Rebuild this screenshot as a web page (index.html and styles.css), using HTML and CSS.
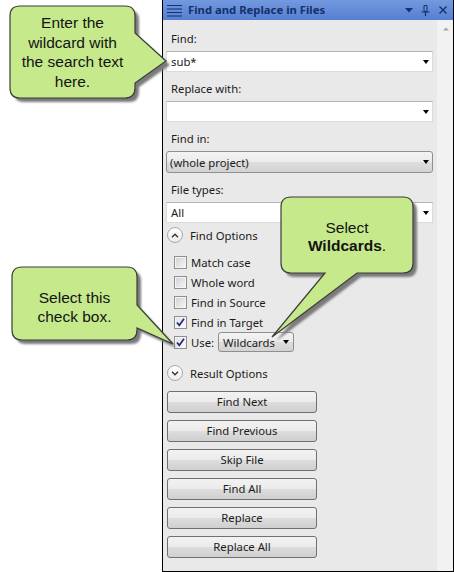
FILE: index.html
```html
<!DOCTYPE html>
<html>
<head>
<meta charset="utf-8">
<title>Find and Replace in Files</title>
<link rel="stylesheet" href="styles.css">
</head>
<body>
<div class="stage">
  <div class="panel">
    <div class="titlebar">
      <svg class="menu-icon" width="15" height="12" viewBox="0 0 15 12">
        <path d="M0 0.5H15M0 4H15M0 7.5H15M0 11H15" stroke="#15306b" stroke-width="1"/>
      </svg>
      <span class="title">Find and Replace in Files</span>
      <span class="title-tools">
        <svg width="8" height="5" viewBox="0 0 8 5"><path d="M0 0H8L4 4.5Z" fill="#15306b"/></svg>
        <svg width="9" height="11" viewBox="0 0 9 11"><path d="M3 0.5H6V6.5H3Z" fill="none" stroke="#15306b"/><path d="M0.5 7H8.5M4.5 7V11" stroke="#15306b" stroke-width="1.2"/></svg>
        <svg width="8" height="8" viewBox="0 0 8 8"><path d="M0.5 0.5L7.5 7.5M7.5 0.5L0.5 7.5" stroke="#15306b" stroke-width="1.4"/></svg>
      </span>
    </div>
    <div class="body">
      <div class="content">
        <div class="field">
          <div class="label">Find:</div>
          <div class="input"><span class="value">sub*</span><span class="arrow"></span></div>
        </div>
        <div class="field">
          <div class="label">Replace with:</div>
          <div class="input"><span class="value"></span><span class="arrow"></span></div>
        </div>
        <div class="field">
          <div class="label">Find in:</div>
          <div class="input combo"><span class="value">(whole project)</span><span class="arrow"></span></div>
        </div>
        <div class="field">
          <div class="label">File types:</div>
          <div class="input"><span class="value">All</span><span class="arrow"></span></div>
        </div>

        <div class="section first-section">
          <span class="circle"><svg width="8" height="5" viewBox="0 0 8 5"><path d="M1 4.2L4 1.2L7 4.2" fill="none" stroke="#333" stroke-width="1.4"/></svg></span>
          <span>Find Options</span>
        </div>

        <div class="checks">
          <div class="check-row"><span class="box"></span><span>Match case</span></div>
          <div class="check-row"><span class="box"></span><span>Whole word</span></div>
          <div class="check-row"><span class="box"></span><span>Find in Source</span></div>
          <div class="check-row"><span class="box checked"><svg width="11" height="11" viewBox="0 0 11 11"><path d="M2 5.5L4.3 8.3L9 1.8" fill="none" stroke="#25277e" stroke-width="1.7"/></svg></span><span>Find in Target</span></div>
          <div class="check-row"><span class="box checked"><svg width="11" height="11" viewBox="0 0 11 11"><path d="M2 5.5L4.3 8.3L9 1.8" fill="none" stroke="#25277e" stroke-width="1.7"/></svg></span><span>Use:</span>
            <span class="small-combo"><span>Wildcards</span><span class="arrow"></span></span>
          </div>
        </div>

        <div class="section second-section">
          <span class="circle"><svg width="8" height="5" viewBox="0 0 8 5"><path d="M1 0.8L4 3.8L7 0.8" fill="none" stroke="#333" stroke-width="1.4"/></svg></span>
          <span>Result Options</span>
        </div>

        <div class="buttons">
          <div class="btn">Find Next</div>
          <div class="btn">Find Previous</div>
          <div class="btn">Skip File</div>
          <div class="btn">Find All</div>
          <div class="btn">Replace</div>
          <div class="btn">Replace All</div>
        </div>
      </div>
      <div class="scrollbar">
        <svg class="scroll-up" width="6" height="4" viewBox="0 0 6 4"><path d="M0 3.5L3 0.5L6 3.5Z" fill="#a4a4a4"/></svg>
      </div>
    </div>
  </div>

  <svg class="callouts" width="454" height="572" viewBox="0 0 454 572">
    <defs>
      <filter id="soft" x="-10%" y="-10%" width="130%" height="130%">
        <feGaussianBlur stdDeviation="1.2"/>
      </filter>
    </defs>
    <g class="shadow" filter="url(#soft)" transform="translate(4 4)">
      <path d="M20 6H125Q135 6 135 16V33L166 61L135 83V88Q135 98 125 98H20Q10 98 10 88V16Q10 6 20 6Z"/>
      <path d="M22 267H127Q137 267 137 277V305L173 344L137 328V330Q137 340 127 340H22Q12 340 12 330V277Q12 267 22 267Z"/>
      <path d="M291 197H403Q413 197 413 207V263Q413 273 403 273H357L272 337L325 273H291Q281 273 281 263V207Q281 197 291 197Z"/>
    </g>
    <g class="bubble">
      <path d="M20 6H125Q135 6 135 16V33L166 61L135 83V88Q135 98 125 98H20Q10 98 10 88V16Q10 6 20 6Z"/>
      <path d="M22 267H127Q137 267 137 277V305L173 344L137 328V330Q137 340 127 340H22Q12 340 12 330V277Q12 267 22 267Z"/>
      <path d="M291 197H403Q413 197 413 207V263Q413 273 403 273H357L272 337L325 273H291Q281 273 281 263V207Q281 197 291 197Z"/>
    </g>
  </svg>

  <div class="callout-text ct1">Enter the<br>wildcard with<br>the search text<br>here.</div>
  <div class="callout-text ct2">Select this<br>check box.</div>
  <div class="callout-text ct3">Select<br><b>Wildcards</b>.</div>
</div>
</body>
</html>
```

FILE: styles.css
```css
* { box-sizing: border-box; }

html, body {
  margin: 0;
  padding: 0;
  background: #ffffff;
}

body {
  width: 454px;
  height: 572px;
  overflow: hidden;
  font-family: "Noto Sans", "Open Sans", sans-serif;
  font-size: 11.3px;
  color: #1b1b1b;
}

.stage {
  position: relative;
  width: 454px;
  height: 572px;
}

.panel {
  margin-left: 162px;
  width: 292px;
  height: 572px;
  border: 1px solid #000;
  border-top: none;
  display: flex;
  flex-direction: column;
}

.titlebar {
  height: 20px;
  flex: none;
  display: flex;
  align-items: center;
  padding: 0 6px 0 4px;
  background: linear-gradient(#7399df, #557fd1);
}

.menu-icon { flex: none; margin-top: 1px; }

.title {
  margin-left: 6px;
  font-weight: bold;
  color: #15306b;
  font-size: 11.3px;
  line-height: 20px;
}

.title-tools {
  margin-left: auto;
  display: flex;
  align-items: center;
  gap: 0;
}
.title-tools svg:nth-child(1) { margin-right: 8px; margin-top: 1px; }
.title-tools svg:nth-child(2) { margin-right: 9px; }

.body {
  flex: 1;
  display: flex;
  background: #e9e9e9;
}

.content {
  width: 274px;
  padding: 9px 4px 0 3px;
  display: flex;
  flex-direction: column;
}

.scrollbar {
  width: 16px;
  background: #f2f2f2;
  display: flex;
  justify-content: center;
  padding-top: 7px;
  padding-left: 1px;
}
.scroll-up { display: block; }

.field { display: flex; flex-direction: column; margin-bottom: 7px; }

.label {
  height: 20px;
  line-height: 20px;
  padding-left: 5px;
  margin-bottom: 2px;
}

.input {
  height: 21px;
  background: #fff;
  border: 1px solid #dadada;
  border-top-color: #b5b5b5;
  display: flex;
  align-items: center;
  padding: 0 3px 0 4px;
}
.input .value { flex: 1; }

.input.combo {
  height: 22px;
  border: 1px solid #8e8f8f;
  border-radius: 3px;
  background: linear-gradient(#f3f3f3 0%, #ebebeb 50%, #dddddd 51%, #d3d3d3 100%);
  padding-left: 3px;
}

.arrow {
  width: 0;
  height: 0;
  border-left: 3.5px solid transparent;
  border-right: 3.5px solid transparent;
  border-top: 4px solid #000;
  flex: none;
}

.section {
  height: 20px;
  display: flex;
  align-items: center;
  padding-left: 1px;
}
.first-section { margin-top: -5px; }
.second-section { margin-top: 11px; }

.circle {
  width: 16px;
  height: 16px;
  border-radius: 50%;
  border: 1px solid #a9a9a9;
  background: linear-gradient(#ffffff, #ececec);
  display: flex;
  align-items: center;
  justify-content: center;
  margin-right: 7px;
}

.checks {
  margin-top: 7px;
  display: flex;
  flex-direction: column;
}

.check-row {
  height: 20px;
  display: flex;
  align-items: center;
  padding-left: 8px;
}

.box {
  width: 13px;
  height: 13px;
  border: 1px solid #8e8f8f;
  background: linear-gradient(135deg, #d0d0d0, #f7f7f7);
  box-shadow: inset 0 0 0 1px #f4f4f4;
  margin-right: 4px;
  display: flex;
  align-items: center;
  justify-content: center;
  flex: none;
}
.box.checked { background: linear-gradient(135deg, #e2e2e2, #fafafa); }

.small-combo {
  margin-left: 4px;
  width: 76px;
  height: 20px;
  border: 1px solid #8e8f8f;
  border-radius: 3px;
  background: linear-gradient(#f3f3f3 0%, #ebebeb 50%, #dddddd 51%, #d3d3d3 100%);
  display: flex;
  align-items: center;
  justify-content: space-between;
  padding: 0 4px 0 4px;
}

.buttons {
  margin-top: 8px;
  display: flex;
  flex-direction: column;
  gap: 7px;
  padding-left: 1px;
}

.btn {
  width: 150px;
  height: 22px;
  border: 1px solid #707070;
  border-radius: 3px;
  background: linear-gradient(#f2f2f2 0%, #ebebeb 50%, #dddddd 51%, #cfcfcf 100%);
  text-align: center;
  line-height: 20px;
}

.callouts {
  position: absolute;
  top: 0;
  left: 0;
  pointer-events: none;
}
.shadow path { fill: #7a7a7a; }
.bubble path {
  fill: #c5e98b;
  stroke: #3d3d3d;
  stroke-width: 1.2;
}

.callout-text {
  position: absolute;
  font-family: "Liberation Sans", Arial, sans-serif;
  font-size: 15.5px;
  color: #141414;
  text-align: center;
}
.ct1 { left: 10px; top: 13px; width: 125px; line-height: 19.5px; }
.ct2 { left: 12px; top: 288px; width: 125px; line-height: 19px; }
.ct3 { left: 281px; top: 219px; width: 132px; line-height: 18px; }
.ct3 b { font-weight: bold; }
```
